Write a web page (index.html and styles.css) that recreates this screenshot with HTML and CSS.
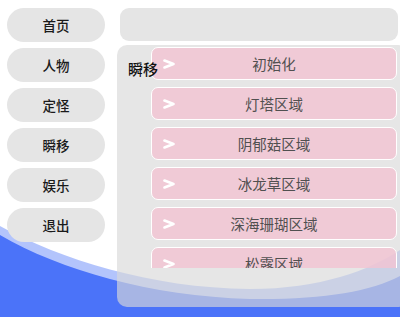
FILE: index.html
```html
<!DOCTYPE html>
<html lang="zh">
<head>
<meta charset="utf-8">
<link rel="stylesheet" href="styles.css">
</head>
<body>
<svg class="wave" width="400" height="317" viewBox="0 0 400 317">
  <path class="wave-light" d="M0,226 C60,259 150,288 250,289 C320,289 370,270 400,250 L400,317 L0,317 Z"/>
  <path class="wave-solid" d="M0,235 C60,270 150,296 250,299 C320,300 370,292 400,276 L400,317 L0,317 Z"/>
</svg>
<div class="app">
  <nav class="menu">
    <div class="menu-btn">首页</div>
    <div class="menu-btn">人物</div>
    <div class="menu-btn">定怪</div>
    <div class="menu-btn">瞬移</div>
    <div class="menu-btn">娱乐</div>
    <div class="menu-btn">退出</div>
  </nav>
  <main class="content">
    <div class="topbar"></div>
    <section class="panel">
      <span class="panel-title">瞬移</span>
      <div class="list">
        <div class="item"><svg class="chev" viewBox="0 0 12 10"><polyline points="1.5,1.5 10.5,5 1.5,8.5"/></svg><span class="item-text">初始化</span></div>
        <div class="item"><svg class="chev" viewBox="0 0 12 10"><polyline points="1.5,1.5 10.5,5 1.5,8.5"/></svg><span class="item-text">灯塔区域</span></div>
        <div class="item"><svg class="chev" viewBox="0 0 12 10"><polyline points="1.5,1.5 10.5,5 1.5,8.5"/></svg><span class="item-text">阴郁菇区域</span></div>
        <div class="item"><svg class="chev" viewBox="0 0 12 10"><polyline points="1.5,1.5 10.5,5 1.5,8.5"/></svg><span class="item-text">冰龙草区域</span></div>
        <div class="item"><svg class="chev" viewBox="0 0 12 10"><polyline points="1.5,1.5 10.5,5 1.5,8.5"/></svg><span class="item-text">深海珊瑚区域</span></div>
        <div class="item"><svg class="chev" viewBox="0 0 12 10"><polyline points="1.5,1.5 10.5,5 1.5,8.5"/></svg><span class="item-text">松露区域</span></div>
      </div>
    </section>
  </main>
</div>
</body>
</html>
```
FILE: styles.css
```css
* { box-sizing: border-box; }
html, body {
  margin: 0;
  width: 400px;
  height: 317px;
  overflow: hidden;
  background: #ffffff;
  font-family: "Noto Sans CJK SC", "Noto Sans", sans-serif;
}
.wave {
  position: absolute;
  left: 0;
  top: 0;
  z-index: 0;
}
.wave-light { fill: rgba(75, 115, 249, 0.42); }
.wave-solid { fill: #4b73f9; }

.app {
  position: relative;
  z-index: 1;
  display: flex;
  height: 317px;
  padding: 8px 0 10px 7px;
}
.menu {
  width: 98px;
  display: flex;
  flex-direction: column;
  gap: 6px;
}
.menu-btn {
  height: 34px;
  border-radius: 17px;
  background: #e5e5e5;
  display: flex;
  align-items: center;
  justify-content: center;
  font-size: 13.5px;
  font-weight: 500;
  color: #1a1a1a;
}
.content {
  flex: 1;
  margin-left: 12px;
  display: flex;
  flex-direction: column;
  gap: 4px;
}
.topbar {
  height: 33px;
  margin: 0 2px 0 3px;
  border-radius: 9px;
  background: #e5e5e5;
}
.panel {
  position: relative;
  flex: 1;
  margin-right: -8px;
  border-radius: 10px;
  background: rgba(216, 216, 216, 0.65);
  padding: 2px 11px 0 34px;
}
.panel-title {
  position: absolute;
  left: 11px;
  top: 13px;
  z-index: 2;
  font-size: 15px;
  font-weight: 500;
  color: #111;
}
.list {
  height: 221px;
  overflow: hidden;
  display: flex;
  flex-direction: column;
  gap: 7px;
}
.item {
  position: relative;
  flex: 0 0 33px;
  height: 33px;
  border: 1.5px solid #ffffff;
  border-radius: 7px;
  background: rgba(241, 195, 210, 0.82);
  display: flex;
  align-items: center;
  justify-content: center;
}
.chev {
  position: absolute;
  left: 10.5px;
  top: 10.5px;
  width: 12px;
  height: 10px;
}
.chev polyline {
  fill: none;
  stroke: #ffffff;
  stroke-width: 2.6;
  stroke-linecap: round;
  stroke-linejoin: round;
}
.item-text {
  font-size: 14.5px;
  font-weight: 400;
  color: #505050;
}
```
